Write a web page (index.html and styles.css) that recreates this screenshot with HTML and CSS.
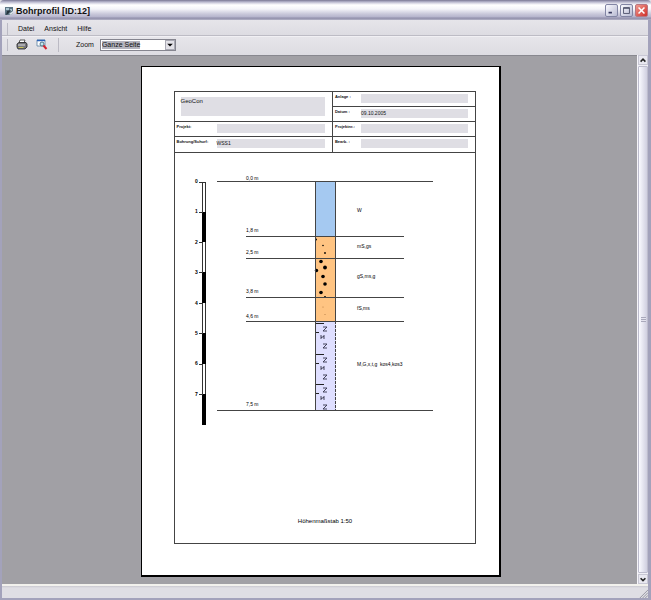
FILE: index.html
```html
<!DOCTYPE html>
<html lang="de">
<head>
<meta charset="utf-8">
<title>Bohrprofil [ID:12]</title>
<link rel="stylesheet" href="styles.css">
</head>
<body>
<div class="window">
  <header class="titlebar">
    <svg class="app-icon" viewBox="0 0 10 10" aria-hidden="true">
      <path d="M1 1h8v6L7 9H1z" fill="#5d7585"/>
      <path d="M2 2h3v2H2zM6 3h2v2H6z" fill="#a9c3cf"/>
      <path d="M2 9l1-4 4-1-3 4z" fill="#26333d"/>
      <path d="M5 8l4-3v2L7 9z" fill="#d9e2e6"/>
    </svg>
    <h1 class="title">Bohrprofil [ID:12]</h1>
    <div class="window-buttons">
      <button class="win-btn" aria-label="Minimieren"><svg viewBox="0 0 13 13"><path d="M3 9h4" stroke="#34365c" stroke-width="2"/></svg></button>
      <button class="win-btn" aria-label="Maximieren"><svg viewBox="0 0 13 13"><path d="M3 3h7v7H3zM3 4h7" fill="none" stroke="#454862"/></svg></button>
      <button class="win-btn close" aria-label="Schließen"><svg viewBox="0 0 13 13"><path d="M3 3l7 7M10 3l-7 7" stroke="#fff" stroke-width="1.800"/></svg></button>
    </div>
  </header>
  <div class="client">
    <nav class="bar menubar">
      <span class="grip"></span>
      <button class="menu">Datei</button>
      <button class="menu">Ansicht</button>
      <button class="menu">Hilfe</button>
    </nav>
    <div class="bar toolbar">
      <span class="grip"></span>
      <button class="tool" aria-label="Drucken">
        <svg viewBox="0 0 12 11">
          <path d="M4 1h5l-1 3H3z" fill="#fff" stroke="#333" stroke-width=".8"/>
          <path d="M1 5l2-1.500h7L11 5v3L9 10H2L1 8z" fill="#77777c" stroke="#222" stroke-width=".8"/>
          <path d="M2 6h7" stroke="#ddd"/>
          <path d="M2.500 8.500h5" stroke="#c9c45a"/>
        </svg>
      </button>
      <button class="tool" aria-label="Seitenansicht">
        <svg viewBox="0 0 12 11">
          <path d="M1 1h8v6H1z" fill="#fff" stroke="#587fa0" stroke-width=".8"/>
          <path d="M1 1.500h8" stroke="#2b62b8" stroke-width="1.500"/>
          <circle cx="6" cy="5" r="2" fill="#bfe7ee" stroke="#35586d" stroke-width=".8"/>
          <path d="M7.500 6.500l3 3.500" stroke="#d3222c" stroke-width="2"/>
        </svg>
      </button>
      <span class="separator"></span>
      <label class="zoom-label" for="zoom">Zoom</label>
      <span class="combo">
        <select id="zoom"><option>Ganze Seite</option></select>
        <svg class="combo-arrow" viewBox="0 0 10 10" aria-hidden="true"><path d="M1.500 3.500h7L5 7z" fill="#000"/></svg>
      </span>
    </div>
    <div class="view">
      <main class="workspace">
        <article class="sheet">
          <div class="frame">
            <div class="head">
              <div class="cell company"><span class="value">GeoCon</span></div>
              <div class="cell"><span class="label">Anlage :</span><span class="value"></span></div>
              <div class="cell"><span class="label">Datum :</span><span class="value">09.10.2005</span></div>
              <div class="cell wide"><span class="label">Projekt:</span><span class="value"></span></div>
              <div class="cell"><span class="label">Projektnr.:</span><span class="value"></span></div>
              <div class="cell wide"><span class="label">Bohrung/Schurf:</span><span class="value">WSS1</span></div>
              <div class="cell"><span class="label">Bearb. :</span><span class="value"></span></div>
            </div>
            <svg class="profile" viewBox="0 0 300 390" role="img" aria-label="Bohrprofil">
              <defs>
                <g id="silt" fill="none" stroke="#33334a">
                  <path d="M1 2.500h8M1 11.500h3" stroke="#222"/>
                  <path d="M8 6h4l-4 4h4M6 14v4M9 14v4M6 16.500l3-1M8 23h4l-4 4h4" stroke-width=".9"/>
                </g>
              </defs>
              <g class="scale">
                <path d="M27.500 29v243M30.500 29v243" stroke="#333"/>
                <path d="M29 59v30M29 119v31M29 180v31M29 241v31" stroke="#000" stroke-width="4"/>
                <path d="M24 29.500h7M24 59.500h4M24 89.500h4M24 119.500h4M24 150.500h4M24 180.500h4M24 211.500h4M24 241.500h4" stroke="#333"/>
                <g class="ticks">
                  <text x="20" y="30">0</text><text x="20" y="60">1</text>
                  <text x="20" y="91">2</text><text x="20" y="121">3</text>
                  <text x="20" y="152">4</text><text x="20" y="182">5</text>
                  <text x="20" y="212">6</text><text x="20" y="243">7</text>
                </g>
              </g>
              <g class="layers">
                <rect x="140" y="28" width="21" height="55" fill="#a5c9f1"/>
                <rect x="140" y="83" width="21" height="85" fill="#ffc482"/>
                <rect x="140" y="168" width="21" height="89" fill="#dfdfff"/>
                <g>
                  <circle cx="141" cy="86.500" r="1"/><circle cx="148" cy="92.500" r=".8"/><circle cx="150" cy="100" r=".9"/>
                  <circle cx="146" cy="108.500" r="1.800"/><circle cx="150" cy="114.500" r="1.900"/><circle cx="141.500" cy="117.500" r="1.700"/>
                  <circle cx="148" cy="123.500" r="1.800"/><circle cx="150" cy="131" r="1.800"/><circle cx="146" cy="139.500" r="1.800"/>
                  <circle cx="150" cy="144" r="1"/><circle cx="148" cy="154" r=".5" fill="#a8703a"/><circle cx="150" cy="161.500" r=".5" fill="#a8703a"/>
                </g>
                <use href="#silt" x="140" y="168"/>
                <use href="#silt" x="140" y="199"/>
                <use href="#silt" x="140" y="229"/>
                <path d="M140.500 28v229M160.500 28v140" stroke="#444"/>
                <path d="M160.500 168v89" stroke="#444" stroke-dasharray="3 1"/>
              </g>
              <path d="M42 28.500h216M71 83.500h158M71 105.500h158M71 144.500h158M71 168.500h158M42 257.500h216" stroke="#444"/>
              <g class="note">
                <text x="71" y="27">0,0 m</text><text x="71" y="79">1,8 m</text>
                <text x="71" y="101">2,5 m</text><text x="71" y="140">3,8 m</text>
                <text x="71" y="165">4,6 m</text><text x="71" y="253">7,5 m</text>
                <text x="182" y="59">W</text><text x="182" y="95">mS,gs</text>
                <text x="182" y="125">gS,ms,g</text><text x="182" y="157">fS,ms</text>
                <text x="182" y="213">M,G,x,t,g&#160; kos4,kos3</text>
              </g>
              <text class="caption" x="150" y="370">Höhenmaßstab 1:50</text>
            </svg>
          </div>
        </article>
      </main>
      <div class="scrollbar">
        <button class="scroll-btn" aria-label="Nach oben"><svg viewBox="0 0 10 10"><path d="M2 7l3-3 3 3" fill="none" stroke="#222" stroke-width="2"/></svg></button>
        <div class="thumb"><span class="thumb-grip"></span></div>
        <button class="scroll-btn" aria-label="Nach unten"><svg viewBox="0 0 10 10"><path d="M2 4l3 3 3-3" fill="none" stroke="#222" stroke-width="2"/></svg></button>
      </div>
    </div>
    <footer class="statusbar">
      <svg class="resize" viewBox="0 0 10 10" aria-hidden="true"><path d="M1 10l9-9M4 10l6-6M7 10l3-3" stroke="#8f8f9c"/></svg>
    </footer>
  </div>
</div>
</body>
</html>
```

FILE: styles.css
```css
* { box-sizing: border-box; }

body {
  margin: 0;
  font-family: "Liberation Sans", Arial, sans-serif;
  font-size: 7px;
  color: #111;
}

button {
  margin: 0;
  padding: 0;
  border: 0;
  background: none;
  font: inherit;
  color: inherit;
}

svg { display: block; }

.window {
  display: flex;
  flex-direction: column;
  height: 100vh;
  background: #e0dfe5;
}

.titlebar {
  display: flex;
  align-items: center;
  height: 20px;
  padding: 1px 3px 0 4px;
  border-radius: 4px 4px 0 0;
  background: linear-gradient(#77758f 0, #9b99b4 1px, #d4d3e2 3px, #fff 5px, #f4f4f9 9px, #c9c8da 14px, #b5b4cc 17px, #8f8da9 18px, #b3b2c6 20px);
}

.app-icon { width: 10px; height: 10px; }

.title {
  flex: 1;
  margin: 0 0 0 2px;
  font-size: 9px;
  line-height: 12px;
  color: #111;
}

.window-buttons { display: flex; gap: 2px; }

.win-btn {
  width: 13px;
  height: 13px;
  border: 1px solid #8285a4;
  border-radius: 2px;
  background: linear-gradient(135deg, #fafaff, #b8bad2);
}

.win-btn svg { width: 11px; height: 11px; }

.close {
  border-color: #b77580;
  background: linear-gradient(135deg, #f09a90, #cf2f2a);
}

.client {
  display: flex;
  flex: 1;
  flex-direction: column;
  min-height: 0;
  border: solid #a3a2bb;
  border-width: 0 3px 2px 2px;
}

.bar {
  display: flex;
  align-items: center;
  padding-left: 5px;
  background: linear-gradient(#e6e5ea, #dddce2);
}

.menubar {
  height: 16px;
  padding-top: 2px;
  border-bottom: 1px solid #bdbcc5;
}

.toolbar {
  height: 19px;
  padding-bottom: 3px;
  border-top: 1px solid #f1f0f4;
}

.grip {
  width: 1px;
  height: 12px;
  margin-right: 10px;
  background: #bbbac4;
}

.menu { margin-right: 10px; line-height: 10px; }

.tool { width: 12px; height: 11px; margin-right: 8px; }
.tool + .tool { margin-right: 10px; }
.toolbar .grip { margin-right: 8px; }

.separator {
  width: 1px;
  height: 14px;
  margin-right: 17px;
  background: #bbbac4;
}

.zoom-label { margin-right: 6px; }

.combo {
  position: relative;
  width: 76px;
  height: 12px;
}

.combo select {
  width: 100%;
  height: 100%;
  padding: 0 11px 0 1px;
  border: 1px solid #85858f;
  border-radius: 0;
  appearance: none;
  background: linear-gradient(#b4b4be, #b4b4be) 1px 1px / 38px 8px no-repeat #fff;
  font: inherit;
  color: #111;
}

.combo-arrow {
  position: absolute;
  top: 1px;
  right: 1px;
  width: 10px;
  height: 10px;
  border: 1px solid #aaaab4;
  background: #e3e2e8;
  pointer-events: none;
}

.view {
  display: flex;
  flex: 1;
  min-height: 0;
}

.workspace {
  display: flex;
  flex: 1;
  justify-content: center;
  padding: 10px 0 7px 2px;
  border-top: 1px solid #88888f;
  background: #a1a0a5;
}

.sheet {
  display: flex;
  height: 100%;
  aspect-ratio: 360 / 511;
  padding: 24px 23px 31px 32px;
  border: solid #000;
  border-width: 1px 2px 2px 1px;
  background: #fff;
}

.frame {
  display: flex;
  flex: 1;
  flex-direction: column;
  min-width: 0;
  border: 1px solid #444;
}

.head {
  display: grid;
  grid-template-columns: 158fr 143fr;
  grid-template-rows: repeat(4, 15px);
  border-bottom: 1px solid #444;
}

.cell {
  display: flex;
  padding: 2px 7px 0 2px;
  border-bottom: 1px solid #444;
  border-left: 1px solid #444;
}

.company, .wide { border-left: 0; }
.cell:nth-last-child(-n+2) { border-bottom: 0; }

.label {
  width: 26px;
  font-size: 4px;
  font-weight: bold;
  line-height: 6px;
  white-space: nowrap;
}

.wide .label { width: 40px; }

.value {
  flex: 1;
  height: 9px;
  background: #dfdee4;
  font-size: 5px;
  line-height: 8px;
}

.company {
  grid-row: span 2;
  padding: 5px 7px 0 6px;
}

.company .value {
  height: 19px;
  font-size: 6px;
}

.profile {
  flex: 1;
  width: 100%;
  min-height: 0;
}

.ticks { font-size: 5px; font-weight: bold; }
.note { font-size: 5px; }
.caption { font-size: 6px; text-anchor: middle; }

.scrollbar {
  display: flex;
  flex-direction: column;
  width: 11px;
  border-left: 1px solid #f6f5fa;
  background: #f0eff5;
}

.scroll-btn {
  height: 10px;
  border: 1px solid #c8c7d4;
  background: #e9e8f0;
}

.scroll-btn svg { width: 8px; height: 8px; }

.thumb {
  display: flex;
  flex: 1;
  align-items: center;
  justify-content: center;
  margin: 1px 0;
  border: 1px solid #bdbccd;
  border-radius: 1px;
  background: linear-gradient(90deg, #fafaff, #d0cfe0);
}

.thumb-grip {
  width: 5px;
  height: 5px;
  background: repeating-linear-gradient(#a9a8bb 0 1px, #e4e3ee 1px 2px);
}

.statusbar {
  display: flex;
  align-items: flex-end;
  justify-content: flex-end;
  height: 14px;
  border-top: 2px solid #f2f1ed;
  background: linear-gradient(#c9c8cf 0, #dfdee4 2px);
}

.resize { width: 9px; height: 9px; }
```
